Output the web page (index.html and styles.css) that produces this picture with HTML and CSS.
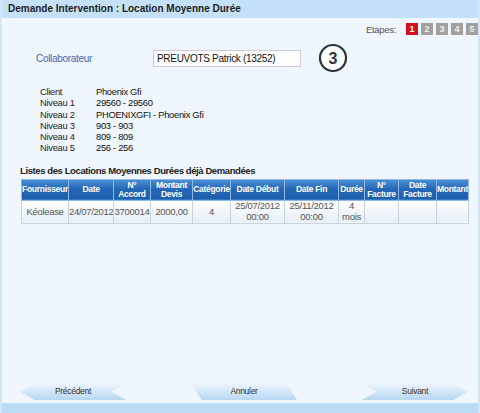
FILE: index.html
```html
<!DOCTYPE html>
<html lang="fr">
<head>
  <meta charset="UTF-8">
  <title>Demande Intervention</title>
  <link rel="stylesheet" href="styles.css">
</head>
<body>
  <div class="panneau">
    <div class="titre">Demande Intervention : Location Moyenne Durée</div>

    <div class="etapes">
      <span class="etapesLabel">Etapes:</span>
      <span class="etape active">1</span>
      <span class="etape">2</span>
      <span class="etape">3</span>
      <span class="etape">4</span>
      <span class="etape">5</span>
    </div>

    <div class="collab">
      <label class="collabLabel">Collaborateur</label>
      <input type="text" class="collabInput" value="PREUVOTS Patrick (13252)">
      <svg class="rond" width="30" height="30" viewBox="0 0 30 30">
        <circle cx="15" cy="15" r="13" fill="#fff" stroke="#26343e" stroke-width="2.2"/>
        <text x="15" y="20.8" text-anchor="middle" font-family="Liberation Sans, Arial, sans-serif" font-weight="bold" font-size="16" fill="#26343e">3</text>
      </svg>
    </div>

    <div class="infos">
      <span class="infoLabel">Client</span><span>Phoenix Gfi</span>
      <span class="infoLabel">Niveau 1</span><span>29560 - 29560</span>
      <span class="infoLabel">Niveau 2</span><span>PHOENIXGFI - Phoenix Gfi</span>
      <span class="infoLabel">Niveau 3</span><span>903 - 903</span>
      <span class="infoLabel">Niveau 4</span><span>809 - 809</span>
      <span class="infoLabel">Niveau 5</span><span>256 - 256</span>
    </div>

    <h3 class="listeTitre">Listes des Locations Moyennes Durées déjà Demandées</h3>

    <table class="tableLMD">
      <colgroup>
        <col style="width:47px"><col style="width:45px"><col style="width:37px"><col style="width:42px">
        <col style="width:38px"><col style="width:54px"><col style="width:54px"><col style="width:26px">
        <col style="width:34px"><col style="width:38px"><col style="width:32px">
      </colgroup>
      <thead>
        <tr>
          <th>Fournisseur</th>
          <th>Date</th>
          <th>N°<br>Accord</th>
          <th>Montant<br>Devis</th>
          <th>Catégorie</th>
          <th>Date Début</th>
          <th>Date Fin</th>
          <th>Durée</th>
          <th>N°<br>Facture</th>
          <th>Date<br>Facture</th>
          <th>Montant</th>
        </tr>
      </thead>
      <tbody>
        <tr>
          <td>Kéolease</td>
          <td>24/07/2012</td>
          <td>3700014</td>
          <td>2000,00</td>
          <td>4</td>
          <td>25/07/2012<br>00:00</td>
          <td>25/11/2012<br>00:00</td>
          <td>4<br>mois</td>
          <td></td>
          <td></td>
          <td></td>
        </tr>
      </tbody>
    </table>

    <div class="vide"></div>

    <div class="boutons">
      <div class="bouton precedent">Précédent</div>
      <div class="bouton annuler">Annuler</div>
      <div class="bouton suivant">Suivant</div>
    </div>

    <div class="pied"></div>
  </div>
</body>
</html>
```

FILE: styles.css
```css
body {
  margin: 0;
  font-family: 'Liberation Sans', Arial, sans-serif;
  color: #222;
}

.panneau {
  height: 413px;
  display: flex;
  flex-direction: column;
  background-color: #eff6fd;
  border-left: 2px solid #d3e7f8;
  border-right: 2px solid #d3e7f8;
  box-sizing: border-box;
}

.titre {
  height: 18px;
  line-height: 18px;
  padding-left: 6px;
  background-color: #c5e1f9;
  font-size: 10px;
  font-weight: bold;
  color: #1d1d1d;
}

/* Etapes */
.etapes {
  display: flex;
  justify-content: flex-end;
  align-items: center;
  gap: 3px;
  margin-top: 5px;
}

.etapesLabel {
  font-size: 9.5px;
  letter-spacing: -0.3px;
  color: #555;
  margin-right: 7px;
}

.etape {
  width: 12px;
  height: 12px;
  line-height: 12px;
  text-align: center;
  font-size: 9px;
  font-weight: bold;
  color: #eee;
  background-color: #a0a0a0;
}

.etape.active {
  background-color: #d3101e;
  color: white;
}

/* Collaborateur */
.collab {
  display: flex;
  align-items: center;
  margin-top: 8px;
  height: 30px;
}

.collabLabel {
  width: 117px;
  padding-left: 34px;
  font-size: 10px;
  letter-spacing: -0.3px;
  color: #4a68b0;
}

.collabInput {
  width: 148px;
  height: 17px;
  box-sizing: border-box;
  border: 1px solid #ccd;
  padding: 0 3px;
  font-family: 'Liberation Sans', Arial, sans-serif;
  font-size: 10px;
  letter-spacing: -0.3px;
  color: #111;
  background: white;
}

.rond {
  margin-left: 17px;
}

/* Infos client */
.infos {
  display: grid;
  grid-template-columns: 56px auto;
  margin: 13px 0 0 38px;
  font-size: 9.4px;
  letter-spacing: -0.3px;
  line-height: 11.3px;
  color: #111;
}

.infoLabel {
  color: #1e1e1e;
}

.listeTitre {
  margin: 11px 0 3px 18px;
  font-size: 9.5px;
  letter-spacing: -0.4px;
  font-weight: bold;
  color: #222;
}

/* Tableau */
.tableLMD {
  margin-left: 19px;
  width: 447px;
  table-layout: fixed;
  border-collapse: collapse;
}

.tableLMD th {
  height: 20px;
  padding: 0;
  background: linear-gradient(#4a8fd6, #2366b5 50%, #1d5fad);
  border: 1px solid #8fb8e2;
  color: white;
  font-size: 8.5px;
  letter-spacing: -0.3px;
  font-weight: bold;
  line-height: 9px;
  text-align: center;
  white-space: nowrap;
  overflow: hidden;
}

.tableLMD td {
  height: 22px;
  padding: 0;
  background: linear-gradient(#ffffff, #e5eef6);
  border: 1px solid #c7d3de;
  color: #555;
  font-size: 9.5px;
  letter-spacing: -0.3px;
  line-height: 10.5px;
  text-align: center;
  white-space: nowrap;
  overflow: hidden;
}

.vide {
  flex: 1;
}

/* Boutons */
.boutons {
  display: flex;
  justify-content: space-between;
  padding: 0 10px 0 18px;
  margin-bottom: 3px;
}

.bouton {
  width: 106px;
  height: 17px;
  line-height: 17px;
  text-align: center;
  font-size: 8.5px;
  letter-spacing: -0.3px;
  color: #333;
  background: linear-gradient(#eef6fd, #b7d7f2);
}

.precedent {
  clip-path: polygon(0 50%, 14% 0, 100% 0, 86% 50%, 100% 100%, 14% 100%);
}

.annuler {
  clip-path: polygon(0 0, 90% 0, 100% 100%, 10% 100%);
}

.suivant {
  clip-path: polygon(0 0, 86% 0, 100% 50%, 86% 100%, 0 100%, 14% 50%);
}

.pied {
  height: 10px;
  background-color: #bcdcf5;
}
```
